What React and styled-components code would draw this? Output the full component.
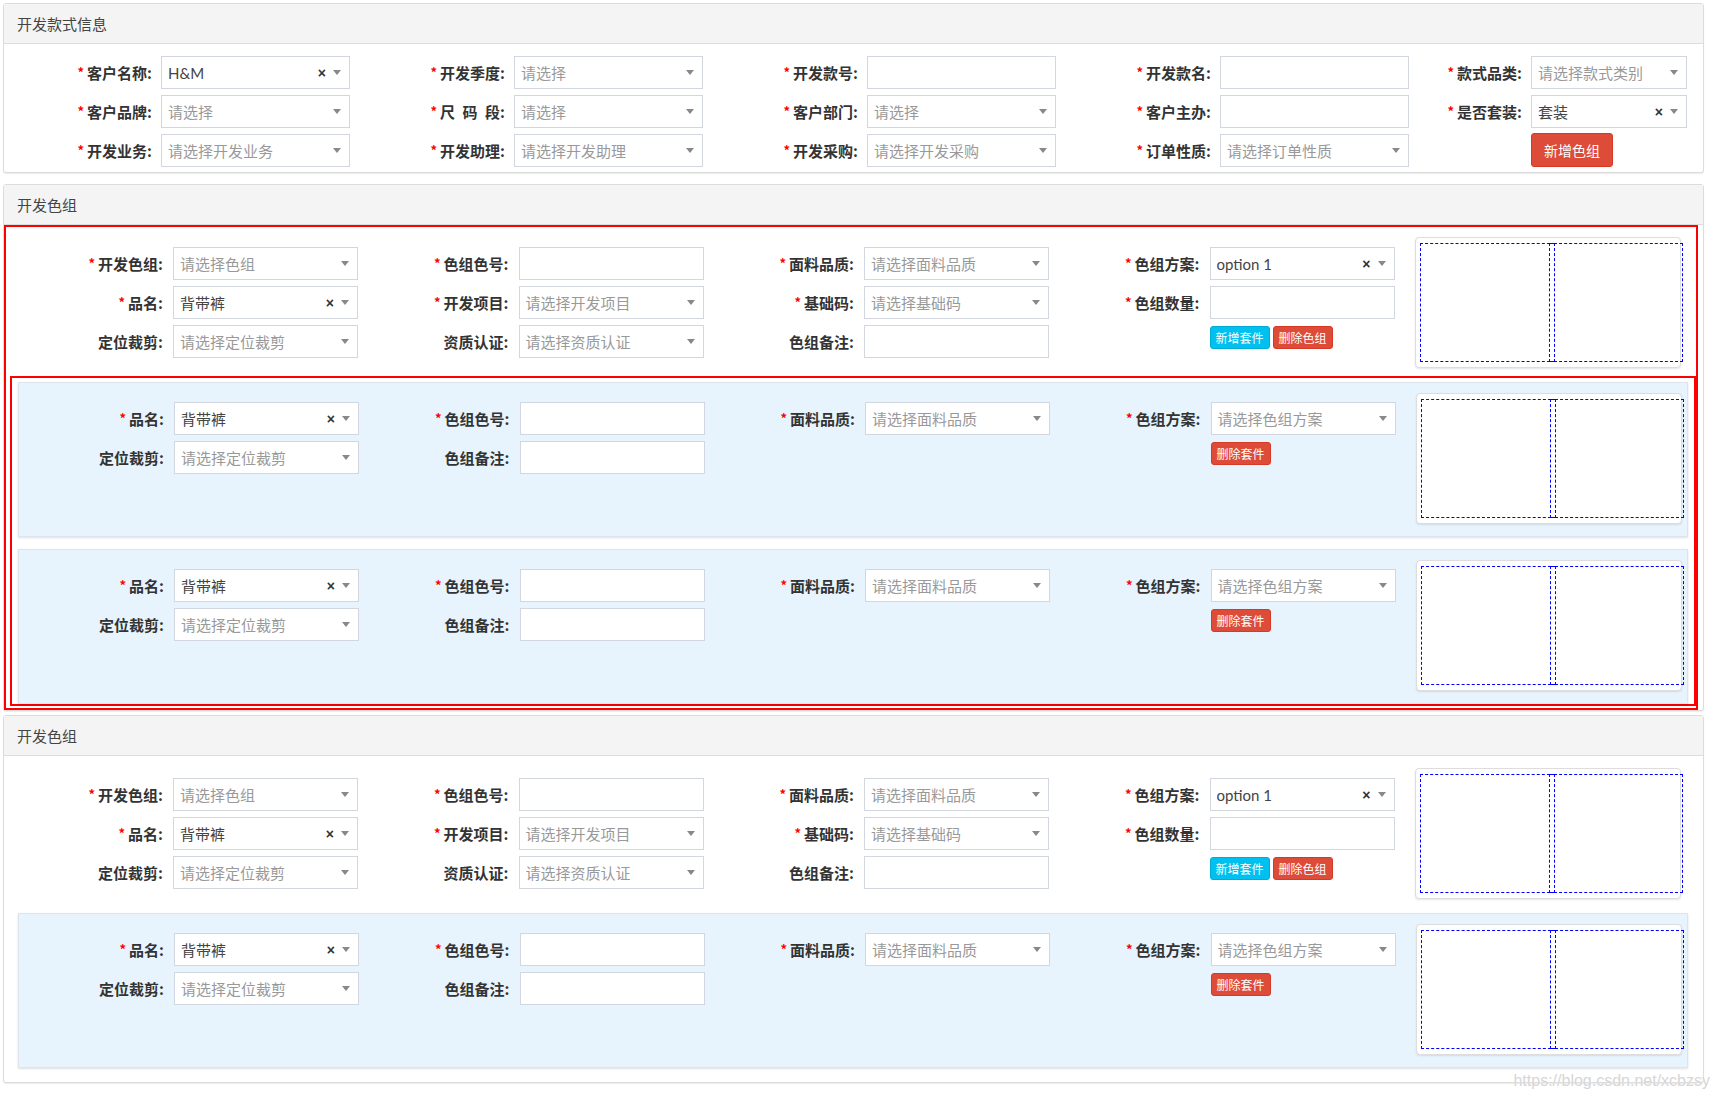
import React from "react";
import styled, { createGlobalStyle } from "styled-components";

// Global
const GlobalStyle = createGlobalStyle`
  html, body { margin: 0; padding: 0; background: #fff; }
  body { font-family: "Lato", "Noto Sans CJK SC", sans-serif; color: #333; }
  * { box-sizing: border-box; }
`;

// Styled Components
const Page = styled.div`
  position: relative;
  width: 1718px;
  min-height: 1100px;
  padding: 3px 0 0 3px;
`;

const Panel = styled.section`
  width: 1701px;
  background: #fff;
  border: 1px solid #dcdcdc;
  border-radius: 3px;
  box-shadow: 0 1px 1px rgba(0, 0, 0, 0.08);
  margin-bottom: ${(props) => props.$gap || 0}px;
`;

const PanelHeader = styled.div`
  height: 40px;
  line-height: 39px;
  padding-left: 13px;
  background: #f4f4f4;
  border-bottom: 1px solid #dddddd;
  font-family: "Noto Sans CJK SC", sans-serif;
  font-size: 15px;
  color: #444;
`;

const InfoBody = styled.div`
  display: grid;
  grid-template-columns: repeat(4, 353px) auto;
  row-gap: 6px;
  padding: 12px 0 5px 18px;
`;

const GroupBody = styled.div`
  margin-right: 5px;
  border: 2px solid ${(props) => (props.$marked ? "#ff0000" : "transparent")};
  padding: 10px 0 ${(props) => (props.$marked ? 2 : 10)}px 0;
`;

const GroupMain = styled.div`
  display: flex;
  align-items: flex-start;
  padding-left: 27px;
`;

const FieldGrid = styled.div`
  display: grid;
  grid-template-columns: repeat(4, 345.5px);
  row-gap: 6px;
  margin-top: ${(props) => props.$top}px;
`;

const SubList = styled.div`
  margin: 8px 0 0 4px;
  border: 2px solid ${(props) => (props.$marked ? "#ff0000" : "transparent")};
  padding: 4px 6px 0 6px;
`;

const SubBox = styled.div`
  display: flex;
  align-items: flex-start;
  height: 155px;
  padding: 10px 5px 0 15px;
  background: #e8f4fd;
  border: 1px solid #dde4eb;
  box-shadow: 0 1px 2px rgba(0, 0, 0, 0.12);
  & + & {
    margin-top: 12px;
  }
`;

const Field = styled.div`
  display: flex;
  align-items: ${(props) => (props.$top ? "flex-start" : "center")};
  height: 33px;
`;

const Label = styled.div`
  flex: none;
  width: ${(props) => props.$w}px;
  margin-right: ${(props) => props.$gap}px;
  text-align: right;
  font-family: "Noto Sans CJK SC", sans-serif;
  font-weight: 700;
  font-size: 15px;
  color: #333;
  white-space: nowrap;
`;

const Star = styled.span`
  color: #ff0000;
  font-size: 13px;
  margin-right: 3px;
  vertical-align: 2px;
`;

const Box = styled.div`
  flex: none;
  width: ${(props) => props.$w}px;
  height: 33px;
  display: flex;
  align-items: center;
  padding: 0 8px 0 6px;
  background: #fff;
  border: 1px solid #d2d6de;
  font-size: 15px;
`;

const Value = styled.span`
  flex: 1;
  white-space: nowrap;
  overflow: hidden;
  color: ${(props) => (props.$ph ? "#999" : "#444")};
`;

const Clear = styled.span`
  font-family: "Liberation Sans", sans-serif;
  font-weight: 700;
  font-size: 14px;
  line-height: 1;
  color: #333;
  margin-right: 7px;
`;

const Caret = styled.span`
  width: 0;
  height: 0;
  border-style: solid;
  border-width: 5px 4px 0 4px;
  border-color: #888 transparent transparent transparent;
`;

const ButtonGroup = styled.div`
  display: flex;
  gap: 3px;
  margin-top: ${(props) => (props.$small ? 1 : -1)}px;
`;

const Btn = styled.button`
  height: ${(props) => (props.$small ? 23 : 34)}px;
  padding: 0 ${(props) => (props.$small ? 5 : 12)}px;
  font-family: "Noto Sans CJK SC", sans-serif;
  font-size: ${(props) => (props.$small ? 12 : 14)}px;
  line-height: 1;
  color: #fff;
  background: ${(props) => (props.$tone === "info" ? "#00c0ef" : "#dd4b39")};
  border: 1px solid ${(props) => (props.$tone === "info" ? "#00acd6" : "#d73925")};
  border-radius: 3px;
  cursor: pointer;
`;

const Preview = styled.div`
  flex: none;
  display: flex;
  width: 266px;
  height: 131px;
  padding: 5px 0 0 4px;
  background: #fff;
  border: 1px solid #dddddd;
  border-radius: 4px;
  box-shadow: 0 1px 2px rgba(0, 0, 0, 0.1);
`;

const DashBox = styled.div`
  flex: none;
  width: ${(props) => props.$w}px;
  height: 119px;
  border: 1px dashed #0000ff;
  & + & {
    margin-left: -6px;
  }
`;

const Watermark = styled.div`
  position: absolute;
  top: 1072px;
  right: 8px;
  font-family: "Liberation Sans", sans-serif;
  font-size: 16px;
  color: #d6d6d6;
  text-shadow: 0 0 1px #fff;
  pointer-events: none;
`;

// Components
const Select = ({ w, value, placeholder, clear }) => (
  <Box $w={w}>
    <Value $ph={!value}>{value || placeholder}</Value>
    {clear && <Clear>×</Clear>}
    <Caret />
  </Box>
);

const FormField = ({ f, labelW, gap, inputW }) => {
  const lw = f.labelW || labelW;
  const iw = f.inputW || inputW;
  return (
    <Field $top={!!f.buttons}>
      <Label $w={lw} $gap={gap}>
        {f.req && <Star>*</Star>}
        {f.label ? f.label + ":" : ""}
      </Label>
      {f.type === "select" && (
        <Select w={iw} value={f.value} placeholder={f.ph} clear={f.clear} />
      )}
      {f.type === "input" && <Box $w={iw} />}
      {f.buttons && (
        <ButtonGroup $small={f.buttons[0].small}>
          {f.buttons.map((b) => (
            <Btn key={b.text} $small={b.small} $tone={b.tone}>
              {b.text}
            </Btn>
          ))}
        </ButtonGroup>
      )}
    </Field>
  );
};

const PreviewCard = () => (
  <Preview>
    <DashBox $w={135} />
    <DashBox $w={134} />
  </Preview>
);

// Data
const infoFields = [
  { req: true, label: "客户名称", type: "select", value: "H&M", clear: true },
  { req: true, label: "开发季度", type: "select", ph: "请选择" },
  { req: true, label: "开发款号", type: "input" },
  { req: true, label: "开发款名", type: "input" },
  { req: true, label: "款式品类", type: "select", ph: "请选择款式类别", labelW: 88, inputW: 156 },
  { req: true, label: "客户品牌", type: "select", ph: "请选择" },
  { req: true, label: "尺\u2002码\u2002段", type: "select", ph: "请选择" },
  { req: true, label: "客户部门", type: "select", ph: "请选择" },
  { req: true, label: "客户主办", type: "input" },
  { req: true, label: "是否套装", type: "select", value: "套装", clear: true, labelW: 88, inputW: 156 },
  { req: true, label: "开发业务", type: "select", ph: "请选择开发业务" },
  { req: true, label: "开发助理", type: "select", ph: "请选择开发助理" },
  { req: true, label: "开发采购", type: "select", ph: "请选择开发采购" },
  { req: true, label: "订单性质", type: "select", ph: "请选择订单性质" },
  { labelW: 88, buttons: [{ text: "新增色组" }] },
];

const groupFields = [
  { req: true, label: "开发色组", type: "select", ph: "请选择色组" },
  { req: true, label: "色组色号", type: "input" },
  { req: true, label: "面料品质", type: "select", ph: "请选择面料品质" },
  { req: true, label: "色组方案", type: "select", value: "option 1", clear: true },
  { req: true, label: "品名", type: "select", value: "背带裤", clear: true },
  { req: true, label: "开发项目", type: "select", ph: "请选择开发项目" },
  { req: true, label: "基础码", type: "select", ph: "请选择基础码" },
  { req: true, label: "色组数量", type: "input" },
  { label: "定位裁剪", type: "select", ph: "请选择定位裁剪" },
  { label: "资质认证", type: "select", ph: "请选择资质认证" },
  { label: "色组备注", type: "input" },
  {
    buttons: [
      { text: "新增套件", small: true, tone: "info" },
      { text: "删除色组", small: true },
    ],
  },
];

const subFields = [
  { req: true, label: "品名", type: "select", value: "背带裤", clear: true },
  { req: true, label: "色组色号", type: "input" },
  { req: true, label: "面料品质", type: "select", ph: "请选择面料品质" },
  { req: true, label: "色组方案", type: "select", ph: "请选择色组方案" },
  { label: "定位裁剪", type: "select", ph: "请选择定位裁剪" },
  { label: "色组备注", type: "input" },
  {},
  { buttons: [{ text: "删除套件", small: true }] },
];

const ColorGroup = ({ marked, subCount, gap }) => (
  <Panel $gap={gap}>
    <PanelHeader>开发色组</PanelHeader>
    <GroupBody $marked={marked}>
      <GroupMain>
        <FieldGrid $top={10}>
          {groupFields.map((f, i) => (
            <FormField key={i} f={f} labelW={130} gap={10} inputW={185} />
          ))}
        </FieldGrid>
        <PreviewCard />
      </GroupMain>
      <SubList $marked={marked}>
        {Array.from({ length: subCount }).map((_, n) => (
          <SubBox key={n}>
            <FieldGrid $top={9}>
              {subFields.map((f, i) => (
                <FormField key={i} f={f} labelW={130} gap={10} inputW={185} />
              ))}
            </FieldGrid>
            <PreviewCard />
          </SubBox>
        ))}
      </SubList>
    </GroupBody>
  </Panel>
);

export default function App() {
  return (
    <Page>
      <GlobalStyle />
      <Panel $gap={11}>
        <PanelHeader>开发款式信息</PanelHeader>
        <InfoBody>
          {infoFields.map((f, i) => (
            <FormField key={i} f={f} labelW={130} gap={9} inputW={189} />
          ))}
        </InfoBody>
      </Panel>
      <ColorGroup marked subCount={2} gap={4} />
      <ColorGroup subCount={1} />
      <Watermark>https://blog.csdn.net/xcbzsy</Watermark>
    </Page>
  );
}
